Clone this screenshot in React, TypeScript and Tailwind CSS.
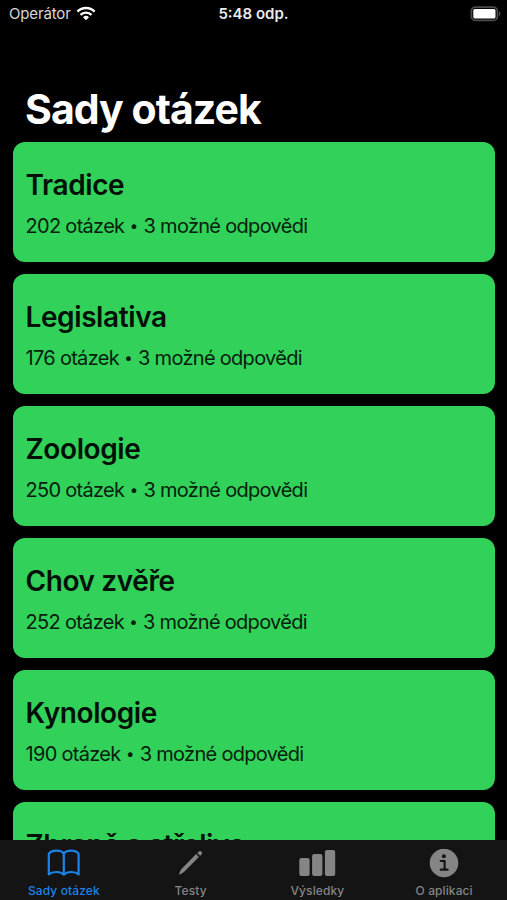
import React, { useState } from 'react';

const questionSets = [
    { title: 'Tradice', count: 202 },
    { title: 'Legislativa', count: 176 },
    { title: 'Zoologie', count: 250 },
    { title: 'Chov zvěře', count: 252 },
    { title: 'Kynologie', count: 190 },
    { title: 'Zbraně a střelivo' },
];

function WifiIcon() {
    return (
        <svg width="20" height="15" viewBox="0 0 20 15" fill="none" stroke="white" strokeWidth="2.4">
            <path d="M1.4 5.6a12.2 12.2 0 0 1 17.2 0" />
            <path d="M4.5 8.9a7.8 7.8 0 0 1 11 0" />
            <path d="M10 14.2 7 11.2a4.3 4.3 0 0 1 6 0Z" fill="white" stroke="none" />
        </svg>
    );
}

function BatteryIcon() {
    return (
        <svg width="32" height="16" viewBox="0 0 32 16">
            <rect x="1.4" y="1.2" width="26" height="13.2" rx="4" fill="none" stroke="#4b4b4b" strokeWidth="1.8" />
            <rect x="3.3" y="3" width="22.2" height="9.6" rx="1.5" fill="white" />
            <path d="M29 5.3c1.9.8 1.9 4.2 0 5Z" fill="#4b4b4b" />
        </svg>
    );
}

function BookIcon() {
    return (
        <svg width="34" height="30" viewBox="0 0 34 30" fill="none" stroke="currentColor" strokeWidth="2.2" strokeLinejoin="round">
            <path d="M17.8 4.6C15.5.6 5.5.4 2.8 4.8V25.4C6.5 22.2 14.3 22.2 17.8 25.6C21.3 22.2 29.1 22.2 32.6 25.4V4.8C30 .4 20 .6 17.8 4.6Z" />
            <path d="M17.8 4.6V25.6" />
        </svg>
    );
}

function PencilIcon() {
    return (
        <svg width="34" height="30" viewBox="0 0 34 30" fill="currentColor">
            <path d="M23.1 5.1 25.9 7.9 10.7 23.2 7.2 25.3C6.5 25.6 5.9 25 6.2 24.4L8 20.5Z" />
            <path d="M24.3 4 25.6 2.7C26.5 1.9 27.7 1.9 28.5 2.7C29.3 3.5 29.3 4.6 28.5 5.4L27.2 6.8Z" />
        </svg>
    );
}

function ChartIcon() {
    return (
        <svg width="38" height="30" viewBox="0 0 38 30" fill="currentColor">
            <rect x="1.3" y="9" width="10.3" height="18" rx="2" />
            <rect x="14.1" y="5" width="10.3" height="22" rx="2" />
            <rect x="26.9" y="1" width="10.3" height="26" rx="2" />
        </svg>
    );
}

function InfoIcon() {
    return (
        <svg width="30" height="30" viewBox="0 0 30 30">
            <circle cx="15" cy="14" r="14.3" fill="currentColor" />
            <circle cx="14.9" cy="7.3" r="2" fill="#141414" />
            <path d="M11.8 12H15.6V20.7M11.8 20.7H18.6" fill="none" stroke="#141414" strokeWidth="2.2" strokeLinecap="round" strokeLinejoin="round" />
        </svg>
    );
}

const tabs = [
    { label: 'Sady otázek', icon: <BookIcon /> },
    { label: 'Testy', icon: <PencilIcon /> },
    { label: 'Výsledky', icon: <ChartIcon /> },
    { label: 'O aplikaci', icon: <InfoIcon /> },
];

export default function App() {
    const [activeTab, setActiveTab] = useState(0);

    return (
        <div className="flex h-[900px] w-[507px] flex-col overflow-hidden bg-black font-['Inter',sans-serif]">
            <header className="grid h-7 shrink-0 grid-cols-3 items-center pl-[9px] pr-[5px] text-white">
                <div className="flex items-center gap-[5px]">
                    <span className="text-[15px] leading-7 tracking-[-0.15px] text-[#d8d8d8]">Operátor</span>
                    <span className="pb-0.5">
                        <WifiIcon />
                    </span>
                </div>
                <span className="pr-1 text-center text-[15px] font-semibold leading-7 text-[#ececec]">5:48 odp.</span>
                <div className="flex justify-end pb-px">
                    <BatteryIcon />
                </div>
            </header>

            <main className="flex min-h-0 flex-1 flex-col overflow-hidden pl-[13px] pr-[12.5px]">
                <h1 className="mt-[56px] shrink-0 pl-[12px] text-[41px] font-bold leading-[50px] tracking-[-0.95px] text-white">Sady otázek</h1>
                <div className="mt-[8.4px] flex flex-col gap-3">
                    {questionSets.map((set) => (
                        <section key={set.title} className="h-[120px] shrink-0 rounded-xl bg-[#32d25a] px-[12.5px] pt-[25px]">
                            <h2 className="text-[28px] font-semibold leading-9 tracking-[-0.4px] text-[#031006]">{set.title}</h2>
                            {set.count && (
                                <p className="mt-[9px] text-[20px] leading-7 tracking-[-0.7px] text-[#06200c]">
                                    {set.count} otázek <span className="pl-[0.5px] pr-[1px] align-[2px] text-[15px] leading-none">•</span> 3 možné odpovědi
                                </p>
                            )}
                        </section>
                    ))}
                </div>
            </main>

            <nav className="grid h-[60px] shrink-0 grid-cols-4 bg-[#141414]">
                {tabs.map((tab, index) => (
                    <button
                        key={tab.label}
                        onClick={() => setActiveTab(index)}
                        className={`flex flex-col items-center pt-[9px] ${index === activeTab ? 'text-[#1a84e8]' : 'text-[#858585]'}`}
                    >
                        {tab.icon}
                        <span className="mt-1 pl-px text-[12px] font-medium leading-4 tracking-[0.1px]">{tab.label}</span>
                    </button>
                ))}
            </nav>
        </div>
    );
}
